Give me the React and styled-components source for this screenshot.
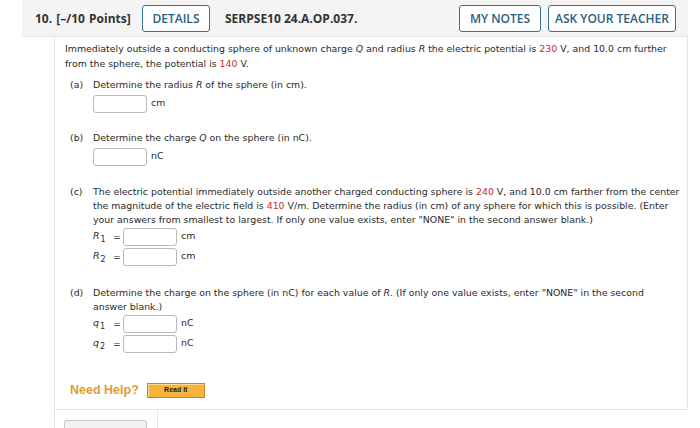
import React from "react";
import styled, { createGlobalStyle } from "styled-components";

const Global = createGlobalStyle`
  html, body { margin: 0; padding: 0; background: #fff; }
  body { width: 700px; height: 428px; overflow: hidden; }
`;

const Header = styled.div`
  margin-left: 22px;
  width: 666px;
  height: 37px;
  box-sizing: border-box;
  background: #f4f4f4;
  border-bottom: 1px solid #e6e6e6;
  display: flex;
  align-items: center;
  padding: 0 12px 0 13px;
  font-family: "Open Sans", sans-serif;
  font-size: 12px;
  font-weight: 700;
  color: #333;
`;

const Points = styled.span`
  width: 107px;
  word-spacing: 1px;
`;

const HButton = styled.span`
  box-sizing: border-box;
  height: 27px;
  display: inline-flex;
  align-items: center;
  justify-content: center;
  width: ${(p) => p.$w}px;
  border: 1.5px solid #3c6f8c;
  border-radius: 3px;
  color: #2b5f7e;
  font-weight: 600;
  font-size: 12px;
  background: #fff;
  margin-left: ${(p) => p.$ml || 0}px;
`;

const Code = styled.span`
  margin-left: 15px;
`;

const Spacer = styled.span`
  flex: 1;
`;

const Body = styled.div`
  margin-left: 54px;
  width: 634px;
  box-sizing: border-box;
  border-left: 1px solid #e6e6e6;
  border-right: 1px solid #e6e6e6;
  border-bottom: 1px solid #e6e6e6;
  padding: 5px 7px 11px 10px;
  font-family: "DejaVu Sans", Verdana, sans-serif;
  font-size: 9.4px;
  line-height: 14.5px;
  color: #2a2a2a;
`;

const Para = styled.p`
  margin: 0;
`;

const Red = styled.span`
  color: #c62d2d;
`;

const Part = styled.div`
  display: grid;
  grid-template-columns: 23px 1fr;
  margin: ${(p) => p.$mt || 0}px 0 0 5px;
  line-height: 14px;
`;

const PartBody = styled.div`
  display: flex;
  flex-direction: column;
`;

const AnswerRow = styled.div`
  display: flex;
  align-items: center;
  height: 20px;
  margin-top: ${(p) => p.$mt || 0}px;
`;

const Box = styled.span`
  display: inline-block;
  box-sizing: border-box;
  width: 54px;
  height: 18px;
  border: 1px solid #b9b9b9;
  border-radius: 3px;
  background: #fff;
`;

const Unit = styled.span`
  margin-left: 4px;
  margin-top: -2px;
`;

const VarLabel = styled.span`
  width: 20px;
  font-style: italic;
  position: relative;
  top: -1px;
`;

const Sub = styled.span`
  font-style: normal;
  font-size: 8px;
  position: relative;
  top: 3px;
  margin-left: 1px;
`;

const Eq = styled.span`
  width: 10px;
`;

const Help = styled.div`
  display: flex;
  align-items: center;
  margin: 29px 0 0 5px;
  font-family: "Liberation Sans", Arial, sans-serif;
`;

const HelpText = styled.span`
  color: #e39a35;
  font-weight: 700;
  font-size: 12.5px;
`;

const ReadIt = styled.span`
  margin-left: 8px;
  box-sizing: border-box;
  width: 58px;
  height: 15px;
  display: inline-flex;
  align-items: center;
  justify-content: center;
  background: #f7b43d;
  border: 1px solid #c98420;
  box-shadow: inset 1px 1px 0 #ffd98e;
  font-size: 7px;
  font-weight: 700;
  color: #222;
`;

const Footer = styled.div`
  margin-left: 54px;
  height: 20px;
  border-left: 1px solid #e6e6e6;
  display: flex;
  align-items: flex-start;
  padding-left: 9px;
`;

const Tab = styled.span`
  margin-top: 10px;
  width: 81px;
  height: 10px;
  border: 1px solid #c8c8c8;
  border-radius: 3px 3px 0 0;
  background: #f2f2f2;
`;

const Panel = styled.span`
  margin-left: 10px;
  flex: 1;
  margin-right: 12px;
  height: 20px;
  border-left: 1px solid #e6e6e6;
`;

function Answer({ label, unit, mt }) {
  return (
    <AnswerRow $mt={mt}>
      {label && (
        <>
          <VarLabel>
            {label[0]}
            <Sub>{label[1]}</Sub>
          </VarLabel>
          <Eq>=</Eq>
        </>
      )}
      <Box />
      <Unit>{unit}</Unit>
    </AnswerRow>
  );
}

export default function App() {
  return (
    <>
      <Global />
      <Header>
        <Points>10. [–/10 Points]</Points>
        <HButton $w={68}>DETAILS</HButton>
        <Code>SERPSE10 24.A.OP.037.</Code>
        <Spacer />
        <HButton $w={82}>MY NOTES</HButton>
        <HButton $w={128} $ml={7}>ASK YOUR TEACHER</HButton>
      </Header>
      <Body>
        <Para>
          Immediately outside a conducting sphere of unknown charge <i>Q</i> and radius <i>R</i> the
          electric potential is <Red>230</Red> V, and 10.0 cm further from the sphere, the potential is{" "}
          <Red>140</Red> V.
        </Para>
        <Part $mt={7}>
          <span>(a)</span>
          <PartBody>
            <span>Determine the radius <i>R</i> of the sphere (in cm).</span>
            <Answer unit="cm" mt={2} />
          </PartBody>
        </Part>
        <Part $mt={17}>
          <span>(b)</span>
          <PartBody>
            <span>Determine the charge <i>Q</i> on the sphere (in nC).</span>
            <Answer unit="nC" mt={2} />
          </PartBody>
        </Part>
        <Part $mt={18}>
          <span>(c)</span>
          <PartBody>
            <span>
              The electric potential immediately outside another charged conducting sphere is <Red>240</Red> V,
              and 10.0 cm farther from the center the magnitude of the electric field is <Red>410</Red> V/m.
              Determine the radius (in cm) of any sphere for which this is possible. (Enter your answers from
              smallest to largest. If only one value exists, enter "NONE" in the second answer blank.)
            </span>
            <Answer label={["R", "1"]} unit="cm" mt={0} />
            <Answer label={["R", "2"]} unit="cm" />
          </PartBody>
        </Part>
        <Part $mt={19}>
          <span>(d)</span>
          <PartBody>
            <span>
              Determine the charge on the sphere (in nC) for each value of <i>R</i>. (If only one value exists,
              enter "NONE" in the second answer blank.)
            </span>
            <Answer label={["q", "1"]} unit="nC" mt={0} />
            <Answer label={["q", "2"]} unit="nC" />
          </PartBody>
        </Part>
        <Help>
          <HelpText>Need Help?</HelpText>
          <ReadIt>Read It</ReadIt>
        </Help>
      </Body>
      <Footer>
        <Tab />
        <Panel />
      </Footer>
    </>
  );
}
